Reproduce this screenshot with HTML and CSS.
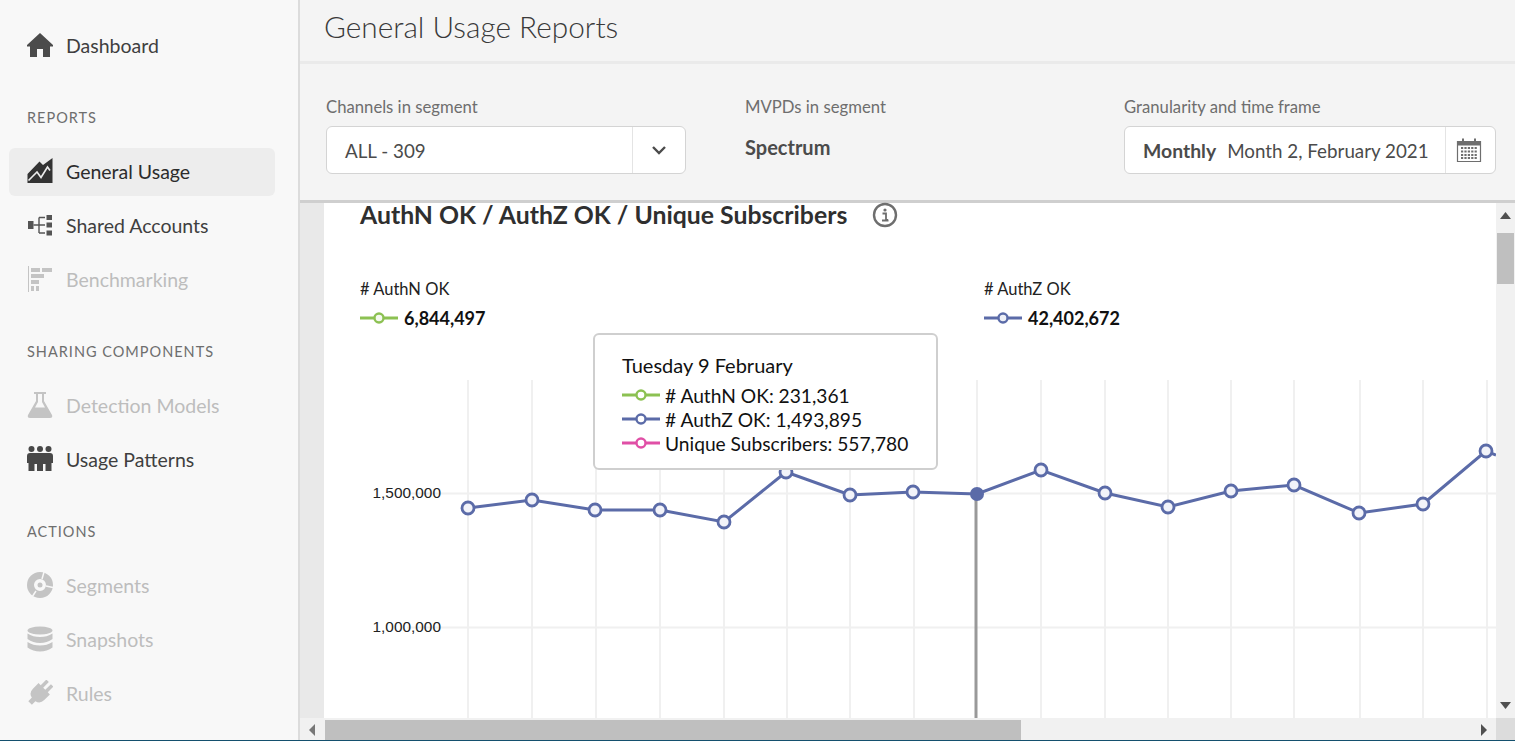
FILE: index.html
```html
<!doctype html>
<html lang="en">
  <head>
    <meta charset="UTF-8" />
    <title>General Usage Reports</title>
    <link rel="stylesheet" href="styles.css">
  </head>
  <body>
    <div class="app">
      <aside class="sidebar">
        <a class="nav-item">
          <svg class="nav-icon" viewBox="0 0 26 26"><path d="M13 1 L26 13 L26 14.500 L23 14.500 L23 25 L16 25 L16 17 L10 17 L10 25 L3 25 L3 14.500 L0 14.500 L0 13 Z" fill="#4b4b4b"/></svg>
          <span>Dashboard</span>
        </a>

        <h2 class="nav-label">REPORTS</h2>
        <a class="nav-item active">
          <svg class="nav-icon" viewBox="0 0 26 26"><path d="M0.500 16 L12.500 3.500 L16 7 L25.500 0 V25 H0.500 Z" fill="#333"/><path d="M1.500 22.500 L10 14 L14 19.500 L20.500 9 L23 12.500" fill="none" stroke="#ededed" stroke-width="1.600"/></svg>
          <span>General Usage</span>
        </a>
        <a class="nav-item">
          <svg class="nav-icon" viewBox="0 0 26 26"><path d="M1 9 H6.500 V17 H1 Z M19.500 3 H25 V8 H19.500 Z M19.500 10.500 H25 V15.500 H19.500 Z M19.500 18.500 H25 V23.500 H19.500 Z" fill="#555"/><path d="M6.500 13 H18 M12 5.500 H18 M12 21 H18 M12 5.500 V21" fill="none" stroke="#555" stroke-width="1.400"/></svg>
          <span>Shared Accounts</span>
        </a>
        <a class="nav-item disabled">
          <svg class="nav-icon" viewBox="0 0 26 26"><path d="M1 0 H2 V26 H1 Z M4 2 H13 V6 H4 Z M15 2 H25 V6 H15 Z M4 8 H17 V12 H4 Z M4 14 H12 V18 H4 Z M4 20 H7 V25 H4 Z M9 20 H12 V25 H9 Z" fill="#c4c4c4"/></svg>
          <span>Benchmarking</span>
        </a>

        <h2 class="nav-label">SHARING COMPONENTS</h2>
        <a class="nav-item disabled">
          <svg class="nav-icon" viewBox="0 0 26 26"><path d="M7 0 H19 V2 H17 V9 L25 23 Q26 26 23 26 H3 Q0 26 1 23 L9 9 V2 H7 Z M11 2 V10 L8 15.500 H18 L15 10 V2 Z" fill="#c4c4c4" fill-rule="evenodd"/></svg>
          <span>Detection Models</span>
        </a>
        <a class="nav-item">
          <svg class="nav-icon" viewBox="0 0 26 26"><g fill="#484848"><circle cx="4.500" cy="3" r="3"/><circle cx="13" cy="3" r="3"/><circle cx="21.500" cy="3" r="3"/><path d="M0 10 Q0 7 3 7 H23 Q26 7 26 10 V17 H24.500 V25 H18.500 V18 H16 V25 H10 V18 H7.500 V25 H1.500 V17 H0 Z"/></g></svg>
          <span>Usage Patterns</span>
        </a>

        <h2 class="nav-label">ACTIONS</h2>
        <a class="nav-item disabled">
          <svg class="nav-icon" viewBox="0 0 26 26"><circle cx="13" cy="13" r="9.500" fill="none" stroke="#c4c4c4" stroke-width="7"/><circle cx="13" cy="13" r="2.500" fill="#c4c4c4"/><path d="M15 7 L17 0 M19 14 L26 15.500 M9 19 L5 25" stroke="#f8f8f8" stroke-width="1.500"/></svg>
          <span>Segments</span>
        </a>
        <a class="nav-item disabled">
          <svg class="nav-icon" viewBox="0 0 26 26"><g fill="#c4c4c4"><ellipse cx="13" cy="4.500" rx="12.500" ry="4"/><path d="M0.500 7.500 Q6 11 13 11 Q20 11 25.500 7.500 V13 Q20 17 13 17 Q6 17 0.500 13 Z"/><path d="M0.500 16 Q6 19.500 13 19.500 Q20 19.500 25.500 16 V21.500 Q20 25.500 13 25.500 Q6 25.500 0.500 21.500 Z"/></g></svg>
          <span>Snapshots</span>
        </a>
        <a class="nav-item disabled">
          <svg class="nav-icon" viewBox="0 0 26 26"><path transform="rotate(45 13 13)" d="M8 -1 H11.500 V7 H14.500 V-1 H18 V7 H21 V15 Q21 21 15.500 22 V27 H10.500 V22 Q5 21 5 15 V7 H8 Z" fill="#c4c4c4"/></svg>
          <span>Rules</span>
        </a>
      </aside>

      <main class="main">
        <header class="page-header">
          <h1>General Usage Reports</h1>
        </header>

        <section class="filters">
          <div class="filter filter-channels">
            <label>Channels in segment</label>
            <div class="field">
              <span class="field-value">ALL - 309</span>
              <span class="field-btn">
                <svg width="16" height="10" viewBox="0 0 16 10"><path d="M2 2 L8 8 L14 2" fill="none" stroke="#4b4b4b" stroke-width="2.400"/></svg>
              </span>
            </div>
          </div>
          <div class="filter filter-mvpds">
            <label>MVPDs in segment</label>
            <div class="mvpd-value">Spectrum</div>
          </div>
          <div class="filter filter-time">
            <label>Granularity and time frame</label>
            <div class="field">
              <span class="field-value"><strong>Monthly</strong>Month 2, February 2021</span>
              <span class="field-btn btn-cal">
                <svg width="26" height="26" viewBox="0 0 26 26"><path d="M1.500 4.500 H24.500 V24.500 H1.500 Z" fill="none" stroke="#6e6e6e" stroke-width="1.200"/><path d="M1 4 H25 V8.500 H1 Z M6 1.500 H8 V5 H6 Z M18 1.500 H20 V5 H18 Z" fill="#6e6e6e"/><path d="M5 11 H21 M5 14.500 H21 M5 18 H21 M5 21 H21" stroke="#6e6e6e" stroke-width="2" stroke-dasharray="2.200 1.200"/></svg>
              </span>
            </div>
          </div>
        </section>

        <div class="viewport">
          <div class="viewport-row">
            <div class="gutter"></div>
            <div class="panel">
              <div class="panel-title">
                <h3>AuthN OK / AuthZ OK / Unique Subscribers</h3>
                <svg class="info-icon" width="26" height="26" viewBox="0 0 26 26"><circle cx="13" cy="13" r="11" fill="none" stroke="#6e6e6e" stroke-width="2.400"/><circle cx="13" cy="8" r="1.600" fill="#6e6e6e"/><path d="M10.500 11.500 H14 V18 H16 M10 18.500 H16.500" fill="none" stroke="#6e6e6e" stroke-width="1.800"/></svg>
              </div>

              <div class="legend">
                <div class="legend-item">
                  <div class="legend-name"># AuthN OK</div>
                  <div class="legend-value">
                    <svg class="marker" viewBox="0 0 38 12"><path d="M0 6 H38" stroke="#8cc152" stroke-width="3"/><circle cx="19" cy="6" r="4.500" fill="#f4f9ee" stroke="#8cc152" stroke-width="2.400"/></svg>
                    6,844,497
                  </div>
                </div>
                <div class="legend-item">
                  <div class="legend-name"># AuthZ OK</div>
                  <div class="legend-value">
                    <svg class="marker" viewBox="0 0 38 12"><path d="M0 6 H38" stroke="#5b6ba8" stroke-width="3"/><circle cx="19" cy="6" r="4.500" fill="#eef0f7" stroke="#5b6ba8" stroke-width="2.400"/></svg>
                    42,402,672
                  </div>
                </div>
              </div>

              <svg class="chart" width="1172" height="348" viewBox="324 370 1172 348">
                <g stroke="#f0f0f0" stroke-width="2">
                  <path d="M407 493.500 H1496 M407 627.500 H1496"/>
                  <path d="M468 380 V718 M532 380 V718 M596 380 V718 M660 380 V718 M724 380 V718 M787 380 V718 M850 380 V718 M914 380 V718 M1041 380 V718 M1105 380 V718 M1168 380 V718 M1231 380 V718 M1294 380 V718 M1360 380 V718 M1423 380 V718 M1487 380 V718"/>
                  <path d="M977 380 V494"/>
                </g>
                <text class="axis" x="441" y="498" text-anchor="end">1,500,000</text>
                <text class="axis" x="441" y="632" text-anchor="end">1,000,000</text>
                <path d="M976 494 V718" stroke="#999" stroke-width="3"/>
                <path d="M468 508 L532 500 L595 510 L660 510 L724 522 L786 472 L850 495 L913 492 L977 494 L1041 470 L1105 493 L1168 507 L1231 491 L1294 485 L1359 513 L1423 504 L1486 451 L1496 455" fill="none" stroke="#5b6ba8" stroke-width="3"/>
                <g fill="#f2f3f9" stroke="#5b6ba8" stroke-width="2.800">
                  <circle cx="468" cy="508" r="6"/>
                  <circle cx="532" cy="500" r="6"/>
                  <circle cx="595" cy="510" r="6"/>
                  <circle cx="660" cy="510" r="6"/>
                  <circle cx="724" cy="522" r="6"/>
                  <circle cx="786" cy="472" r="6"/>
                  <circle cx="850" cy="495" r="6"/>
                  <circle cx="913" cy="492" r="6"/>
                  <circle cx="1041" cy="470" r="6"/>
                  <circle cx="1105" cy="493" r="6"/>
                  <circle cx="1168" cy="507" r="6"/>
                  <circle cx="1231" cy="491" r="6"/>
                  <circle cx="1294" cy="485" r="6"/>
                  <circle cx="1359" cy="513" r="6"/>
                  <circle cx="1423" cy="504" r="6"/>
                  <circle cx="1486" cy="451" r="6"/>
                </g>
                <circle cx="977" cy="494" r="7" fill="#5b6ba8"/>
              </svg>

              <div class="tooltip">
                <div class="tooltip-title">Tuesday 9 February</div>
                <div class="tooltip-row">
                  <svg class="marker" viewBox="0 0 38 12"><path d="M0 6 H38" stroke="#8cc152" stroke-width="3"/><circle cx="19" cy="6" r="4.500" fill="#fff" stroke="#8cc152" stroke-width="2.400"/></svg>
                  # AuthN OK: 231,361
                </div>
                <div class="tooltip-row">
                  <svg class="marker" viewBox="0 0 38 12"><path d="M0 6 H38" stroke="#5b6ba8" stroke-width="3"/><circle cx="19" cy="6" r="4.500" fill="#fff" stroke="#5b6ba8" stroke-width="2.400"/></svg>
                  # AuthZ OK: 1,493,895
                </div>
                <div class="tooltip-row">
                  <svg class="marker" viewBox="0 0 38 12"><path d="M0 6 H38" stroke="#e04fa6" stroke-width="3"/><circle cx="19" cy="6" r="4.500" fill="#fff" stroke="#e04fa6" stroke-width="2.400"/></svg>
                  Unique Subscribers: 557,780
                </div>
              </div>
            </div>
            <div class="vscroll">
              <svg width="11" height="7" viewBox="0 0 11 7"><path d="M0 7 L5.500 0 L11 7 Z" fill="#505050"/></svg>
              <div class="vthumb"></div>
              <svg class="arrow-down" width="11" height="7" viewBox="0 0 11 7"><path d="M0 0 L5.500 7 L11 0 Z" fill="#505050"/></svg>
            </div>
          </div>
          <div class="hscroll">
            <svg class="arrow-left" width="6" height="12" viewBox="0 0 6 12"><path d="M6 0 L0 6 L6 12 Z" fill="#777"/></svg>
            <div class="hthumb"></div>
            <svg class="arrow-right" width="6" height="12" viewBox="0 0 6 12"><path d="M0 0 L6 6 L0 12 Z" fill="#505050"/></svg>
            <div class="corner"></div>
          </div>
        </div>
      </main>
    </div>
    <div class="bottom-line"></div>
  </body>
</html>
```

FILE: styles.css
```css
* {
  box-sizing: border-box;
}
html,
body {
  margin: 0;
  height: 741px;
  overflow: hidden;
}
body {
  font-family: Lato, "Open Sans", sans-serif;
  color: #3a3a3a;
  background: #f4f4f4;
}
.app {
  display: flex;
  height: 740px;
}
.bottom-line {
  height: 1px;
  background: #14506e;
}

/* sidebar */
.sidebar {
  width: 300px;
  flex: none;
  padding: 22px 23px 0 9px;
  background: #f8f8f8;
  border-right: 2px solid #dcdcdc;
}
.nav-item {
  display: flex;
  align-items: center;
  gap: 13px;
  height: 48px;
  margin-bottom: 6px;
  padding: 0 0 2px 18px;
  border-radius: 6px;
  font-size: 19.500px;
  color: #3f3f3f;
}
.nav-item.active {
  background: #ededed;
  color: #2c2c2c;
}
.nav-item.disabled {
  color: #bdbdbd;
}
.nav-icon {
  width: 26px;
  height: 26px;
  flex: none;
}
.nav-label {
  margin: 38px 0 20px 18px;
  height: 20px;
  font-size: 14.500px;
  line-height: 20px;
  font-weight: 400;
  letter-spacing: 1px;
  color: #6e6e6e;
}

/* header + filters */
.main {
  flex: 1;
  min-width: 0;
  display: flex;
  flex-direction: column;
}
.page-header {
  height: 64px;
  padding-left: 24px;
  border-bottom: 3px solid #eaeaea;
  background: #f4f4f4;
}
.page-header h1 {
  margin: 0;
  font-size: 29.800px;
  line-height: 53px;
  font-weight: 300;
  color: #3a3a3a;
}
.filters {
  display: flex;
  height: 139px;
  padding: 32px 19px 0 26px;
  border-bottom: 3px solid #cfcfcf;
  background: #f4f4f4;
}
.filter label {
  display: block;
  height: 22px;
  margin-bottom: 8px;
  font-size: 16.700px;
  line-height: 22px;
  color: #6e6e6e;
}
.filter-channels {
  width: 360px;
}
.filter-mvpds {
  flex: 1;
  padding-left: 59px;
}
.filter-time {
  width: 372px;
}
.field {
  display: flex;
  height: 48px;
  background: #fff;
  border: 1px solid #d4d4d4;
  border-radius: 6px;
}
.field-value {
  flex: 1;
  padding-left: 18px;
  font-size: 18.800px;
  line-height: 48px;
  color: #4b4b4b;
  white-space: nowrap;
}
.field-value strong {
  margin-right: 11px;
  font-size: 19.400px;
  font-weight: 700;
}
.field-btn {
  display: flex;
  align-items: center;
  justify-content: center;
  width: 53px;
  border-left: 1px solid #e4e4e4;
}
.btn-cal {
  width: 50px;
  padding-right: 3px;
}
.mvpd-value {
  margin-top: 15px;
  font-size: 20px;
  line-height: 28px;
  font-weight: 700;
  color: #4b4b4b;
}

/* scroll area */
.viewport {
  flex: 1;
  min-height: 0;
  display: flex;
  flex-direction: column;
}
.viewport-row {
  flex: 1;
  min-height: 0;
  display: flex;
}
.gutter {
  width: 24px;
  flex: none;
  background: #e9e9e9;
}
.panel {
  position: relative;
  flex: 1;
  min-width: 0;
  background: #fff;
}
.panel-title {
  display: flex;
  align-items: center;
  gap: 25px;
  height: 24px;
  margin-left: 36px;
}
.panel-title h3 {
  margin: 0;
  font-size: 24.800px;
  line-height: 24px;
  font-weight: 700;
  color: #2f2f2f;
}
.info-icon {
  flex: none;
}
.legend {
  display: flex;
  gap: 396px;
  height: 143px;
  padding: 52px 0 0 36px;
}
.legend-item {
  width: 228px;
  flex: none;
}
.legend-name {
  height: 20px;
  margin-bottom: 9px;
  font-size: 16.500px;
  line-height: 20px;
  color: #222;
}
.legend-value {
  display: flex;
  align-items: center;
  gap: 6px;
  font-size: 18px;
  line-height: 20px;
  font-weight: 700;
  color: #111;
}
.marker {
  width: 38px;
  height: 12px;
  flex: none;
}
.chart {
  display: block;
}
.axis {
  font-family: "Liberation Sans", Arial, sans-serif;
  font-size: 15.400px;
  fill: #222;
}
.tooltip {
  position: absolute;
  left: 269px;
  top: 130px;
  width: 345px;
  height: 137px;
  padding: 16px 0 0 27px;
  background: #fff;
  border: 2px solid #cfcfcf;
  border-radius: 6px;
  color: #111;
}
.tooltip-title {
  height: 32px;
  font-size: 20px;
  line-height: 28px;
}
.tooltip-row {
  display: flex;
  align-items: center;
  gap: 5px;
  height: 24px;
  font-size: 19.200px;
  white-space: nowrap;
}

/* scrollbars */
.vscroll {
  display: flex;
  flex-direction: column;
  align-items: center;
  width: 19px;
  flex: none;
  padding-top: 9px;
  background: #f1f1f1;
}
.vthumb {
  width: 17px;
  height: 51px;
  margin-top: 14px;
  background: #bfbfbf;
}
.arrow-down {
  margin-top: auto;
  margin-bottom: 9px;
}
.hscroll {
  display: flex;
  align-items: center;
  height: 22px;
  flex: none;
  padding-top: 2px;
  background: #f1f1f1;
}
.arrow-left {
  margin-left: 9px;
  flex: none;
}
.hthumb {
  width: 696px;
  height: 20px;
  margin-left: 10px;
  background: #bfbfbf;
}
.arrow-right {
  margin-left: auto;
  margin-right: 9px;
  flex: none;
}
.corner {
  width: 19px;
  height: 22px;
  margin-top: -2px;
  flex: none;
  background: #dcdcdc;
}
```
